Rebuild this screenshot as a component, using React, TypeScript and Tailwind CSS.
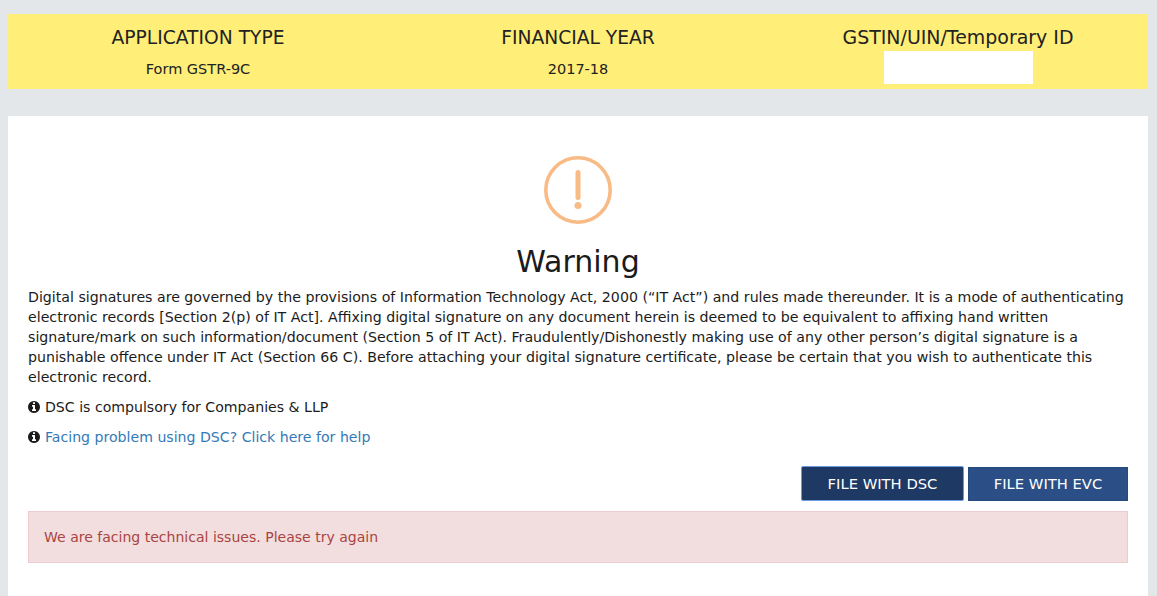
function InfoIcon() {
  return (
    <svg className="-mx-px h-[14px] w-[14px] shrink-0 text-[#1b1b1b]" viewBox="0 0 1792 1792" fill="currentColor">
      <path d="M1152 1376v-160q0-14-9-23t-23-9h-96v-512q0-14-9-23t-23-9h-320q-14 0-23 9t-9 23v160q0 14 9 23t23 9h96v320h-96q-14 0-23 9t-9 23v160q0 14 9 23t23 9h448q14 0 23-9t9-23zm-128-896v-160q0-14-9-23t-23-9h-192q-14 0-23 9t-9 23v160q0 14 9 23t23 9h192q14 0 23-9t9-23zm640 416q0 209-103 385.5t-279.5 279.5-385.5 103-385.5-103-279.5-279.5-103-385.5 103-385.5 279.5-279.5 385.5-103 385.5 103 279.5 279.5 103 385.5z" />
    </svg>
  );
}

export default function App() {
  return (
    <div className="h-[596px] overflow-hidden bg-[#e4e7ea] pl-2 pr-[9px] pt-[14px] text-[14.12px] leading-5 text-[#1b1b1b] [font-family:'DejaVu_Sans',sans-serif]">
      <div className="grid h-[75px] grid-cols-3 bg-[#ffee77] text-center text-[#222]">
        <div className="flex flex-col items-center">
          <div className="mt-[13px] text-[18.7px] leading-[22px]">APPLICATION TYPE</div>
          <div className="mt-[10px] text-[14.5px] leading-5">Form GSTR-9C</div>
        </div>
        <div className="flex flex-col items-center">
          <div className="mt-[13px] text-[18.7px] leading-[22px]">FINANCIAL YEAR</div>
          <div className="mt-[10px] text-[14.5px] leading-5">2017-18</div>
        </div>
        <div className="flex flex-col items-center">
          <div className="mt-[12px] text-[18.95px] leading-[22px]">GSTIN/UIN/Temporary ID</div>
          <div className="mt-[3px] h-[33px] w-[149px] bg-white" />
        </div>
      </div>
      <div className="mt-[27px] h-[480px] bg-white px-5 pt-10">
        <div className="flex justify-center">
          <svg width="68" height="68" viewBox="0 0 68 68" fill="none">
            <circle cx="34" cy="34" r="32.2" stroke="#f8bb86" strokeWidth="3.6" />
            <rect x="31.5" y="14" width="5" height="30" rx="2.5" fill="#f8bb86" />
            <circle cx="34" cy="49.5" r="3.5" fill="#f8bb86" />
          </svg>
        </div>
        <h1 className="mt-[18px] text-center text-[30px] leading-[40px] text-[#1b1b1b]">Warning</h1>
        <p className="mt-[5px] text-[14.16px] leading-5">
          Digital signatures are governed by the provisions of Information Technology Act, 2000 (“IT Act”) and rules made thereunder. It is a mode of authenticating electronic records [Section 2(p) of IT Act]. Affixing digital signature on any document herein is deemed to be equivalent to affixing hand written signature/mark on such information/document (Section 5 of IT Act). Fraudulently/Dishonestly making use of any other person’s digital signature is a punishable offence under IT Act (Section 66 C). Before attaching your digital signature certificate, please be certain that you wish to authenticate this electronic record.
        </p>
        <div className="mt-[10px] flex items-center gap-[5px]">
          <InfoIcon />
          <span>DSC is compulsory for Companies &amp; LLP</span>
        </div>
        <div className="mt-[10px] flex items-center gap-[5px]">
          <InfoIcon />
          <a className="text-[#337ab7]">Facing problem using DSC? Click here for help</a>
        </div>
        <div className="mt-[19px] flex items-center justify-end gap-1">
          <button className="h-[35px] w-[163px] rounded-[2px] border border-[#6a9be0] bg-[#1f3965] text-[14.75px] text-white">FILE WITH DSC</button>
          <button className="h-[34px] w-[160px] border border-[#244a80] bg-[#2c4e86] text-[14.75px] text-white">FILE WITH EVC</button>
        </div>
        <div className="mt-[10px] flex h-[52px] items-center border border-[#ebccd1] bg-[#f2dede] px-[15px] text-[14.04px] text-[#a94442]">
          We are facing technical issues. Please try again
        </div>
      </div>
    </div>
  );
}
